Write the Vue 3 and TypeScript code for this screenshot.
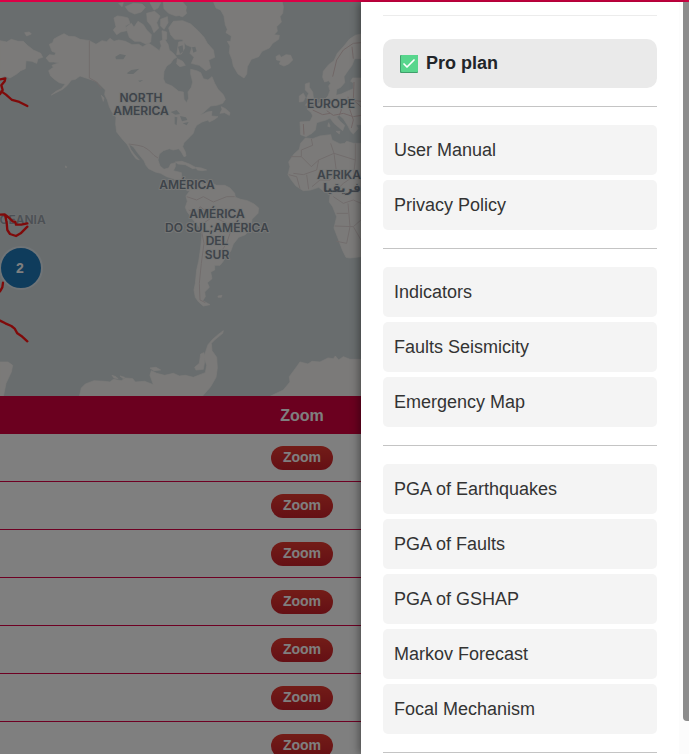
<script setup lang="ts">
interface MenuLink {
  label: string
  href: string
}

const groups: MenuLink[][] = [
  [
    { label: 'User Manual', href: '#manual' },
    { label: 'Privacy Policy', href: '#privacy' },
  ],
  [
    { label: 'Indicators', href: '#indicators' },
    { label: 'Faults Seismicity', href: '#faults-seismicity' },
    { label: 'Emergency Map', href: '#emergency-map' },
  ],
  [
    { label: 'PGA of Earthquakes', href: '#pga-earthquakes' },
    { label: 'PGA of Faults', href: '#pga-faults' },
    { label: 'PGA of GSHAP', href: '#pga-gshap' },
    { label: 'Markov Forecast', href: '#markov' },
    { label: 'Focal Mechanism', href: '#focal' },
  ],
]

const rows: number[] = [1, 2, 3, 4, 5, 6, 7]
</script>

<template>
  <div class="page">
    <div class="accent"></div>
    <div class="layout">
      <main class="content">
        <svg class="map" viewBox="0 2 361 394" preserveAspectRatio="xMinYMin slice">
          <rect class="sea" x="0" y="0" width="1200" height="800" />
          <g transform="scale(0.33333)">
            <g class="land">
              <!-- North America -->
              <path d="M148 133 158 128 162 117 178 108 192 101 206 109 225 110 240 118 268 122 288 133 306 122 320 125 330 115 342 124 356 120 376 124 396 134 416 133 428 140 446 130 462 140 478 152 484 138 480 124 494 118 504 133 508 150 520 160 530 172 520 178 512 190 500 198 492 214 490 236 496 250 516 258 536 274 550 276 552 298 560 308 566 294 564 276 574 262 578 246 572 222 572 208 590 212 602 218 610 236 624 240 636 230 644 250 654 268 670 284 676 298 668 310 650 316 632 318 612 336 600 346 622 336 636 334 634 348 654 350 644 358 628 366 624 360 606 366 590 376 584 386 580 400 566 414 552 428 548 440 556 456 558 468 552 470 544 456 536 446 520 450 508 446 490 452 478 462 474 480 480 498 492 508 506 504 512 492 526 488 526 500 520 512 544 518 546 540 552 554 572 562 584 560 578 570 562 572 548 560 536 546 520 536 500 530 482 520 466 516 446 506 438 496 432 482 414 460 400 440 386 432 392 448 404 464 418 480 408 476 396 460 382 434 366 416 350 396 347 372 348 352 336 336 328 320 322 300 314 284 316 270 304 258 292 246 276 240 258 234 240 228 226 238 214 240 202 256 188 268 172 276 154 285 168 274 184 266 196 252 178 248 166 240 152 228 146 212 160 202 156 196 178 188 160 186 148 186 138 174 148 164 164 166 168 158 156 154Z" />
              <!-- Arctic islands -->
              <path d="M342 54 352 48 368 50 384 54 390 70 376 78 380 92 362 96 350 104 340 90 348 80Z" />
              <path d="M378 82 394 70 402 82 414 64 430 74 440 90 454 104 452 126 438 132 420 124 404 124 388 112Z" />
              <path d="M376 20 400 10 426 12 436 22 424 36 404 42 386 34Z M440 40 464 34 480 48 470 68 476 84 462 98 454 78 442 64Z M482 58 502 50 504 68 492 88 482 78Z M450 8 482 8 474 24 462 30Z M490 6 548 6 560 20 554 44 528 48 506 40 492 26Z M506 84 520 64 548 62 572 72 594 92 612 112 622 130 640 150 644 172 626 180 632 204 618 212 598 196 574 190 582 172 570 160 576 142 558 134 546 118 524 118 512 104Z M536 126 552 124 554 144 544 162 530 164Z M486 92 500 96 500 118 488 120Z M532 176 548 184 556 196 540 200 530 192Z M356 10 370 8 366 20Z" />
              <path d="M74 98 88 96 94 102 80 108Z M196 498 200 500 198 504Z M304 286 312 294 310 304Z M664 320 676 326 690 338 688 346 674 338 660 340 666 328Z" />
              <!-- Siberia -->
              <path d="M0 122 20 126 34 118 54 124 70 124 82 136 100 150 122 160 128 172 114 176 110 190 96 184 78 182 76 206 62 212 50 222 30 234 14 228 0 236Z" />
              <!-- Caribbean -->
              <path d="M526 486 546 484 568 492 590 504 578 506 556 494 534 492Z M588 502 604 504 620 510 606 512 592 510Z" />
              <!-- South America -->
              <path d="M574 566 586 556 600 548 612 554 632 548 650 556 674 556 690 564 704 580 706 592 722 598 742 602 762 612 776 624 774 640 756 658 752 684 736 704 716 712 700 732 692 754 680 766 668 786 660 796 644 796 644 810 632 816 636 836 622 848 628 862 614 876 616 890 608 902 630 914 610 918 596 906 586 892 582 870 586 850 590 810 596 784 602 744 606 704 600 684 580 660 562 636 556 622 562 604 558 588Z M654 888 666 886 664 892 654 892Z" />
              <!-- Antarctica -->
              <path d="M0 1086 24 1086 38 1096 34 1116 18 1150 10 1190 0 1190Z" />
              <path d="M238 1190 244 1164 256 1152 282 1142 314 1144 330 1146 340 1138 364 1142 376 1134 398 1136 406 1146 434 1144 460 1154 450 1126 454 1112 470 1120 494 1126 520 1120 538 1128 556 1126 580 1132 600 1124 616 1118 620 1096 612 1070 624 1034 638 1018 654 1004 670 992 668 1000 646 1018 634 1030 636 1052 650 1072 652 1104 648 1132 632 1160 606 1190Z M584 1102 598 1090 602 1062 612 1058 614 1084 610 1108 588 1110Z M450 1104 468 1102 482 1110 462 1112Z M336 1126 348 1130 354 1136 342 1134Z M360 1128 374 1132 370 1136Z" />
              <path d="M808 1190 850 1170 870 1146 868 1130 890 1100 900 1086 924 1092 936 1084 960 1086 984 1074 1000 1076 1006 1068 1016 1080 1030 1070 1050 1078 1083 1078 1600 1078 1600 1190Z" />
            </g>
            <g class="land" transform="translate(540 0)">
              <!-- Greenland and Iceland -->
              <path d="M100 4 108 24 122 30 132 48 136 74 142 88 138 98 154 108 152 124 142 124 150 138 148 158 156 178 160 198 174 222 192 234 200 222 202 200 214 178 236 170 246 154 268 144 278 130 296 118 298 106 282 104 292 94 290 80 304 66 300 50 308 40 310 20 306 4Z M0 26 16 28 20 40 8 50 0 48Z" />
              <path d="M288 170 298 164 304 172 318 164 332 166 338 180 326 192 312 198 298 192 302 182 290 180Z" />
              <!-- Europe -->
              <path d="M430 214 446 194 462 182 472 160 492 138 508 118 526 106 543 102 543 176 524 176 516 196 504 212 492 230 494 248 482 262 470 268 468 286 484 282 506 272 520 266 520 248 512 244 518 234 543 234 543 374 528 374 534 386 520 402 512 394 504 378 490 356 478 346 470 350 480 364 494 376 488 392 474 380 462 370 450 354 438 360 424 364 410 368 406 390 396 400 378 410 362 404 360 366 390 364 398 348 394 338 382 328 402 320 418 308 432 300 444 288 450 272 446 258 452 250 446 242 434 246 428 232Z" />
              <path d="M376 252 388 248 388 262 398 276 400 292 408 304 396 314 376 316 386 304 380 294 386 280 376 270Z M358 288 370 280 376 292 370 304 358 306Z M446 368 450 378 446 392 442 384Z M468 394 480 394 478 402Z" />
              <!-- Africa -->
              <path d="M376 414 398 416 420 408 452 404 456 420 480 432 494 430 500 424 520 430 543 430 543 770 510 774 498 772 488 752 472 710 462 684 470 650 458 620 448 606 450 586 448 570 432 574 416 562 392 570 370 572 348 558 334 540 324 524 330 500 326 486 342 462 358 448 362 430Z" />
            </g>
            <!-- Great Lakes, northern lakes -->
            <g class="water">
              <path d="M346 170 360 162 378 166 370 178 348 178Z M380 220 394 210 418 206 400 222 386 222Z M414 242 430 240 420 246Z M512 336 530 330 540 342 526 344Z M524 350 532 352 530 376 524 372Z M540 348 558 352 562 360 546 364Z M548 370 566 366 560 376Z" />
              <path d="M534 140 548 136 550 154 540 162Z M576 142 586 140 590 154 580 158Z" />
              <path d="M956 382 970 374 1000 386 1004 400 980 402Z" />
            </g>
            <g class="border">
              <path d="M268 122V234L290 246 304 266M386 432 414 436 430 440 446 450 462 466 474 474M560 590 590 600 610 590 640 606 680 590 704 590M600 620 640 650 680 670 690 700 680 730 660 760M604 690 612 730 604 790 598 850 600 900 616 908M566 630 590 640 600 620M640 650 610 670" />
              <path d="M872 470 904 470 904 450 938 436 934 416M904 470 934 500 956 480 1002 460 992 430M1002 460 1066 480 1066 430M956 480 950 510 910 524 880 520M1002 460 1010 520 990 540 960 540 936 560M1066 480 1060 530 1030 550 1010 570M866 524 890 530 900 566M920 524 926 568M1000 590 1030 610 1060 600 1083 610M1004 678 1060 680 1083 660M1044 610 1050 680 1040 730 1010 724M1060 680 1083 720M1010 640 1044 640" />
            </g>
            <g class="border warm">
              <path d="M998 230 1010 180 1030 150 1060 130 1083 128M1060 176 1056 140M992 320 1020 312 1050 300 1083 304M980 332 1000 346 1030 340 1060 350 1083 346M1010 296 1024 330 1018 346M1044 290 1050 330 1060 360 1054 384M1062 246 1060 300 1083 320M938 330 968 344 990 340M910 372 912 404" />
            </g>
          </g>
          <g class="label">
            <text x="141" y="102">NORTH</text>
            <text x="141" y="115">AMERICA</text>
            <text x="187" y="189">AMÉRICA</text>
            <text x="217" y="218">AMÉRICA</text>
            <text x="217" y="232">DO SUL;AMÉRICA</text>
            <text x="217" y="245">DEL</text>
            <text x="217" y="259">SUR</text>
            <text x="331" y="108">EUROPE</text>
            <text x="339" y="179">AFRIKA</text>
            <text class="arabic" x="344" y="192">أفريقيا</text>
            <text class="faint" x="18" y="224">OCEANIA</text>
          </g>
          <g class="fault" transform="scale(0.33333)">
            <path d="M0 238 16 235 14 244 4 256 8 270 0 282M4 274 18 284 36 300 58 306 82 318" />
            <path d="M0 644 14 643 28 654 38 664 46 666 48 674 64 674 82 670M16 648 20 668 22 690 30 702 48 708 62 700 82 680" />
            <path d="M9 848 7 862 0 874M0 962 16 970 34 978 44 986 52 1000 64 1008 82 1024" />
          </g>
          <circle class="cluster" cx="21" cy="268" r="21" />
          <text class="count" x="20" y="273">2</text>
        </svg>

        <table class="events">
          <thead>
            <tr>
              <th class="rest"></th>
              <th class="action" scope="col">Zoom</th>
            </tr>
          </thead>
          <tbody>
            <tr v-for="row in rows" :key="row">
              <td></td>
              <td class="action"><button class="zoom" type="button">Zoom</button></td>
            </tr>
          </tbody>
        </table>
        <div class="backdrop"></div>
      </main>

      <aside class="drawer">
        <nav class="menu">
          <hr class="rule light" />
          <div class="plan">
            <svg class="check" viewBox="0 0 18 18" aria-hidden="true">
              <rect width="18" height="18" rx="1" fill="#3f9e6b" />
              <rect x="1" width="17" height="17" rx="1" fill="#58d68d" />
              <path d="M4 9 7 12 14 5" fill="none" stroke="#fff" stroke-width="1.700" stroke-linecap="round" stroke-linejoin="round" />
            </svg>
            <span>Pro plan</span>
          </div>
          <hr class="rule" />
          <template v-for="(group, index) in groups" :key="index">
            <div class="group">
              <a v-for="link in group" :key="link.label" class="link" :href="link.href">{{ link.label }}</a>
            </div>
            <hr class="rule" />
          </template>
        </nav>
        <div class="track"><div class="thumb"></div></div>
      </aside>
    </div>
  </div>
</template>

<style>
body {
  margin: 0;
  overflow: hidden;
}
</style>

<style scoped>
.page {
  display: flex;
  flex-direction: column;
  height: 100vh;
  overflow: hidden;
  font-family: "Liberation Sans", Arial, sans-serif;
  background: #fff;
}
.accent {
  flex: none;
  height: 2px;
  background: #dc0046;
}
.layout {
  display: flex;
  flex: 1;
  min-height: 0;
}
.content {
  position: relative;
  flex: 1;
  min-width: 0;
  overflow: hidden;
}
.backdrop {
  position: absolute;
  inset: 0;
  background: rgba(0, 0, 0, 0.5);
}
.map {
  display: block;
  width: 100%;
  height: 394px;
}
.sea,
.water {
  fill: #d3dadc;
}
.land {
  fill: #f6f5f2;
  stroke: #f6f5f2;
  stroke-width: 2;
  stroke-linejoin: round;
}
.border {
  fill: none;
  stroke: #e4d9d9;
  stroke-width: 3;
}
.warm {
  stroke: #e2cdcd;
}
.fault {
  fill: none;
  stroke: #ff1414;
  stroke-width: 7;
  stroke-linecap: round;
  stroke-linejoin: round;
}
.label {
  font-family: Inter, "DejaVu Sans", sans-serif;
  font-size: 12px;
  font-weight: 600;
  text-anchor: middle;
  fill: #7d8895;
  stroke: #eceeec;
  stroke-width: 2px;
  stroke-linejoin: round;
  paint-order: stroke;
}
.arabic {
  font-family: "DejaVu Sans", sans-serif;
  font-weight: 700;
}
.faint {
  fill: #98a1aa;
  stroke: #d9dfe0;
}
.cluster {
  fill: #1f78b8;
  stroke: #dfe8ee;
  stroke-width: 2px;
}
.count {
  font-size: 14px;
  font-weight: 700;
  text-anchor: middle;
  fill: #fff;
}
.events {
  width: 100%;
  border-collapse: separate;
  border-spacing: 0;
  background: #fff;
}
.events th {
  box-sizing: border-box;
  height: 38px;
  padding: 2px 0 0;
  background: #d6003f;
  color: #fff;
  font-size: 16px;
  line-height: 20px;
}
.events td {
  box-sizing: border-box;
  height: 48px;
  padding: 0;
  border-bottom: 1px solid #dc0046;
}
.events .action {
  width: 118px;
  text-align: center;
  vertical-align: middle;
}
.zoom {
  display: inline-block;
  height: 24px;
  padding: 0 12px 2px;
  border: 0;
  border-radius: 12px;
  background: linear-gradient(#e6392f, #c9202a);
  color: #fff;
  font-family: inherit;
  font-size: 14px;
  font-weight: 700;
  line-height: 22px;
  vertical-align: middle;
}
.drawer {
  position: relative;
  display: flex;
  flex: none;
  width: 328px;
  background: #fff;
  box-shadow: -2px 0 8px rgba(0, 0, 0, 0.4);
}
.menu {
  flex: 1;
  min-width: 0;
  padding: 13px 22px 0;
  overflow: hidden;
}
.rule {
  height: 1px;
  margin: 18px 0;
  border: 0;
  background: #c4c4c4;
}
.rule.light {
  margin: 0 0 23px;
  background: #ececec;
}
.plan {
  display: flex;
  align-items: center;
  gap: 8px;
  height: 49px;
  padding: 0 17px;
  border-radius: 10px;
  background: #eaeaea;
  color: #212529;
  font-size: 18px;
  font-weight: 700;
}
.check {
  width: 18px;
  height: 18px;
}
.group {
  display: flex;
  flex-direction: column;
  gap: 5px;
}
.link {
  padding: 11px;
  border-radius: 5px;
  background: #f4f4f4;
  color: #333;
  font-size: 18px;
  line-height: 28px;
  text-decoration: none;
}
.track {
  display: flex;
  flex: none;
  justify-content: flex-end;
  width: 10px;
  background: #fcfcfc;
}
.thumb {
  width: 6px;
  height: 95.6%;
  border-radius: 0 0 0 4px;
  background: #8b8b8b;
}
</style>
